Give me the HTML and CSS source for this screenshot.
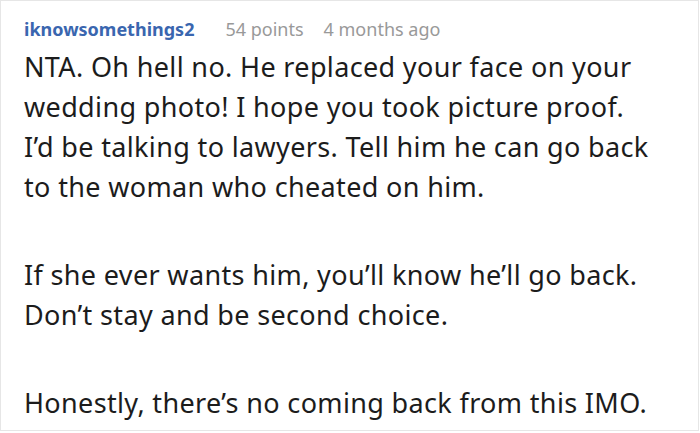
FILE: index.html
```html
<!DOCTYPE html>
<html lang="en">
<head>
<meta charset="utf-8">
<title>Comment</title>
<link rel="stylesheet" href="styles.css">
</head>
<body>
<article class="comment">
  <header class="comment-meta">
    <a class="author" href="#">iknowsomethings2</a>
    <span class="points">54 points</span>
    <span class="time">4 months ago</span>
  </header>
  <div class="comment-body">
    <p>NTA. Oh hell no. He replaced your face on your wedding photo! I hope you took picture proof. I’d be talking to lawyers. Tell him he can go back to the woman who cheated on him.</p>
    <p>If she ever wants him, you’ll know he’ll go back. Don’t stay and be second choice.</p>
    <p>Honestly, there’s no coming back from this IMO.</p>
  </div>
</article>
</body>
</html>
```

FILE: styles.css
```css
html, body {
  margin: 0;
  padding: 0;
  background: #ffffff;
}

.comment {
  box-sizing: border-box;
  width: 699px;
  height: 431px;
  border: 1px solid #e6e6e6;
  padding: 16px 44px 0 23px;
  font-family: "Noto Sans", "Open Sans", sans-serif;
  overflow: hidden;
}

.comment-meta {
  display: flex;
  align-items: baseline;
  font-size: 18px;
  line-height: 24px;
}

.author {
  color: #3a66af;
  font-weight: 700;
  text-decoration: none;
}

.points {
  color: #999999;
  margin-left: 31px;
}

.time {
  color: #999999;
  margin-left: 20px;
}

.comment-body {
  margin-top: 6px;
  color: #1c1c1c;
  font-size: 27px;
  letter-spacing: 0.35px;
  line-height: 40px;
}

.comment-body p {
  margin: 0 0 48px 0;
}
```
